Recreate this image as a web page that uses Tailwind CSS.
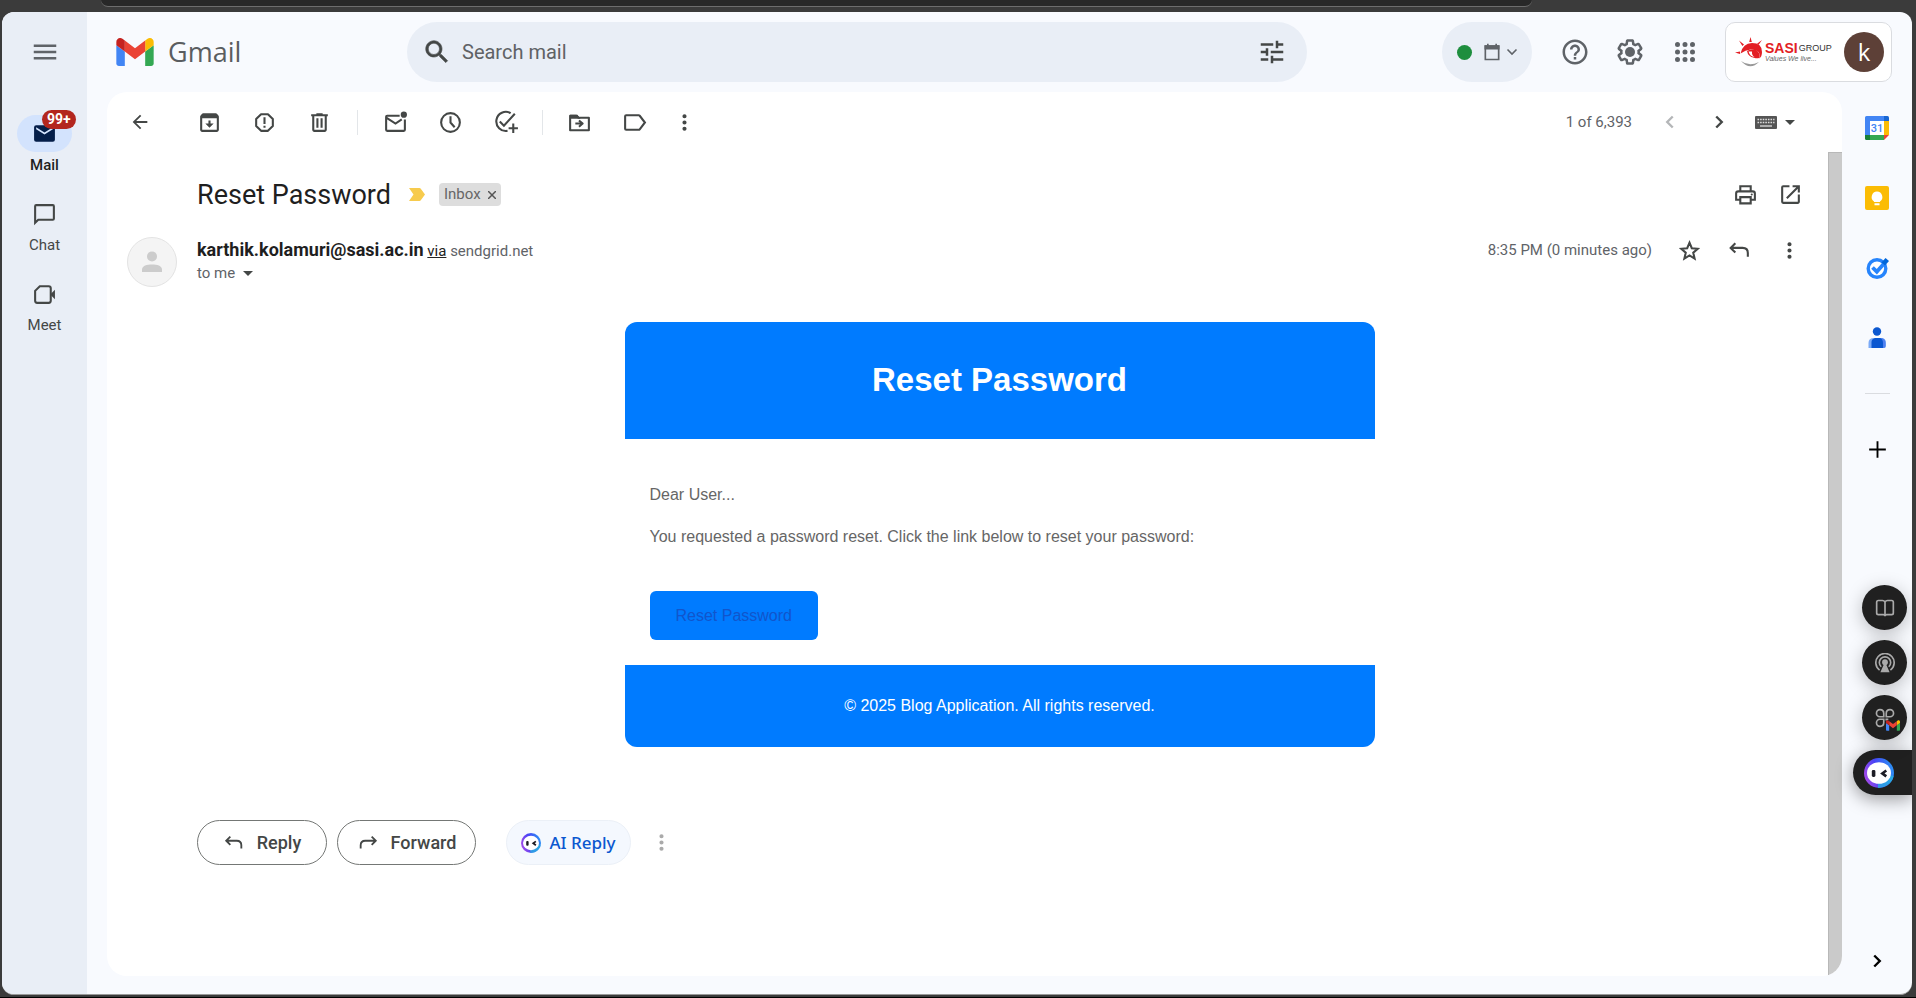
<!DOCTYPE html>
<html lang="en">
<head>
<meta charset="utf-8">
<meta name="viewport" content="width=device-width, initial-scale=1">
<title>Reset Password - Gmail</title>
<script src="https://cdn.jsdelivr.net/npm/@tailwindcss/browser@4"></script>
</head>
<body class="flex h-screen min-h-[900px] flex-col overflow-hidden border-b border-black bg-[#3b3b3b] font-['Roboto',sans-serif] text-[#444746]">
<svg class="absolute size-0" aria-hidden="true">
  <symbol id="gmail" viewBox="52 42 88 66">
    <path fill="#4285f4" d="M58 108h14V74L52 59v43c0 3.32 2.69 6 6 6"/>
    <path fill="#34a853" d="M120 108h14c3.32 0 6-2.69 6-6V59l-20 15"/>
    <path fill="#fbbc04" d="M120 48v26l20-15v-8c0-7.42-8.47-11.65-14.4-7.2"/>
    <path fill="#ea4335" d="M72 74V48l24 18 24-18v26L96 92"/>
    <path fill="#c5221f" d="M52 51v8l20 15V48l-5.6-4.2c-5.94-4.45-14.4-.22-14.4 7.2"/>
  </symbol>
  <linearGradient id="ring" x1="0" y1="0.8" x2="1" y2="0.5">
    <stop offset="0" stop-color="#b14be8"/><stop offset=".5" stop-color="#4a43f5"/><stop offset="1" stop-color="#2c8df5"/>
  </linearGradient>
  <symbol id="robot" viewBox="0 0 30 30">
    <circle cx="15" cy="15" r="15" fill="url(#ring)"/>
    <path d="M14 29.9a15 15 0 0 0 15.6-12l-5-1Q21 25 14 25z" fill="#25b5e0" opacity=".75"/>
    <ellipse cx="15" cy="15" rx="12" ry="10.8" fill="#fff"/>
    <rect x="7.8" y="12" width="3.6" height="7" rx="1.4" fill="#1c1c24"/>
    <path d="M22.3 12.5 18.3 15.4l4 3" fill="none" stroke="#1c1c24" stroke-width="2.6"/>
  </symbol>
  <symbol id="dots" viewBox="0 0 24 24"><path d="M12 8a2 2 0 1 0 0-4 2 2 0 0 0 0 4zm0 2a2 2 0 1 0 0 4 2 2 0 0 0 0-4zm0 6a2 2 0 1 0 0 4 2 2 0 0 0 0-4z"/></symbol>
  <symbol id="reply" viewBox="0 0 24 24"><path d="M8 5 3.500 9.500 8 14M4 9.500h11q5 0 5 5V18" fill="none" stroke="currentColor" stroke-width="2"/></symbol>
  <symbol id="right" viewBox="0 0 24 24"><path d="m9 6 6 6-6 6" fill="none" stroke="currentColor" stroke-width="2.600"/></symbol>
</svg>

<div class="flex h-3 shrink-0 justify-center" aria-hidden="true">
  <div class="mr-[384px] ml-[101px] h-[7px] flex-1 rounded-b-2xl border-b border-[#6d6d6d] bg-[#282828]"></div>
</div>

<div class="relative mr-1 mb-0.5 ml-0.5 flex flex-1 overflow-hidden rounded-xl border-b border-[#999] bg-[#f8fafe]">
  <nav class="flex w-[85px] shrink-0 flex-col items-center bg-[#e9eef6] text-[15px] leading-5">
    <button class="mt-[25px] grid size-[30px] place-items-center" aria-label="Main menu"><svg class="size-[30px] fill-[#5f6368]" viewBox="0 0 24 24"><path d="M3 18h18v-2H3v2zm0-5h18v-2H3v2zm0-7v2h18V6H3z"/></svg></button>
    <a href="#mail" class="relative mt-12 flex flex-col items-center gap-[3px] font-medium text-[#1f1f1f]">
      <span class="grid h-[37px] w-[55px] place-items-center rounded-full bg-[#d3e3fd]"><svg class="size-[25px] fill-[#041e49]" viewBox="0 0 24 24"><path d="M4 4h16a2 2 0 0 1 2 2v12a2 2 0 0 1-2 2H4a2 2 0 0 1-2-2V6a2 2 0 0 1 2-2zm16 4V6l-8 5-8-5v2l8 5z"/></svg></span>
      <span class="absolute -top-[5px] left-[25px] rounded-full bg-[#b3261e] px-[5px] text-[14px] leading-[19px] font-bold text-white">99+</span>
      Mail
    </a>
    <a href="#chat" class="mt-6 flex flex-col items-center gap-1.5">
      <span class="grid h-[30px] place-items-center"><svg class="size-[25px] fill-none stroke-[#444746] stroke-2" viewBox="0 0 24 24"><path d="M3 20V4q0-1 1-1h16q1 0 1 1v12q0 1-1 1H6z"/></svg></span>
      Chat
    </a>
    <a href="#meet" class="mt-6 flex flex-col items-center gap-1.5">
      <span class="grid h-[30px] place-items-center"><svg class="size-[25px] fill-none stroke-[#444746] stroke-2" viewBox="0 0 24 24"><path d="M7.500 4H16q2 0 2 2v12q0 2-2 2H5q-2 0-2-2V8.500z"/><path class="fill-[#444746] stroke-none" d="m17.500 12 4.500-4.500v9z"/></svg></span>
      Meet
    </a>
  </nav>

  <div class="flex min-w-0 flex-1 flex-col">
    <header class="flex h-20 shrink-0 items-center pr-5">
      <a href="#inbox" class="flex w-[320px] items-center gap-3.5 pl-[29px] text-[27px] text-[#5a5d60] font-['Open_Sans',sans-serif]">
        <svg class="h-7 w-[38px]"><use href="#gmail"/></svg>Gmail
      </a>
      <form class="flex h-[60px] max-w-[900px] flex-1 items-center rounded-full bg-[#e9eef6] pr-5 pl-[15px]">
        <button type="button" aria-label="Search"><svg class="size-[30px] fill-[#444746] stroke-[#444746] stroke-[0.500px]" viewBox="0 0 24 24"><path d="M15.500 14h-.79l-.28-.27C15.410 12.590 16 11.110 16 9.500 16 5.910 13.090 3 9.500 3S3 5.910 3 9.500 5.910 16 9.500 16c1.610 0 3.090-.59 4.230-1.570l.27.28v.79l5 4.990L20.490 19l-4.990-5zm-6 0C7.010 14 5 11.990 5 9.500S7.010 5 9.500 5 14 7.010 14 9.500 11.990 14 9.500 14z"/></svg></button>
        <input type="text" aria-label="Search mail" placeholder="Search mail" class="ml-2.5 min-w-0 flex-1 bg-transparent text-[20px] outline-none placeholder:text-[#5f6265]">
        <button type="button" aria-label="Show search options"><svg class="size-[30px] fill-[#444746]" viewBox="0 0 24 24"><path d="M3 17v2h6v-2H3zM3 5v2h10V5H3zm10 16v-2h8v-2h-8v-2h-2v6h2zM7 9v2H3v2h4v2h2V9H7zm14 4v-2H11v2h10zm-6-4h2V7h4V5h-4V3h-2v6z"/></svg></button>
      </form>
      <div class="ml-auto flex shrink-0 items-center">
        <button class="flex h-[60px] w-[90px] items-center rounded-full bg-[#e9eef6] pl-[15px]" aria-label="Status: active">
          <span class="size-[15px] rounded-full bg-[#1e8e3e]"></span>
          <svg class="ml-[10px] size-5" viewBox="0 0 24 24"><path d="M4 5h16v16H4z" fill="none" stroke="#5f6368" stroke-width="2"/><path d="M3 4h18v5H3zM6 2h2v3H6zM16 2h2v3h-2z" fill="#5f6368"/></svg>
          <svg class="ml-1 size-3 fill-none stroke-[#5f6368] stroke-[1.600px]" viewBox="0 0 12 12"><path d="m1.500 3.500 4.500 4.500 4.500-4.500"/></svg>
        </button>
        <button class="ml-[28px]" aria-label="Support"><svg class="size-[30px] fill-[#5f6368]" viewBox="0 0 24 24"><path d="M11 18h2v-2h-2v2zm1-16C6.480 2 2 6.480 2 12s4.480 10 10 10 10-4.480 10-10S17.520 2 12 2zm0 18c-4.410 0-8-3.590-8-8s3.590-8 8-8 8 3.590 8 8-3.590 8-8 8zm0-14c-2.210 0-4 1.790-4 4h2c0-1.100.9-2 2-2s2 .9 2 2c0 2-3 1.750-3 5h2c0-2.250 3-2.500 3-5 0-2.210-1.790-4-4-4z"/></svg></button>
        <button class="ml-[25px]" aria-label="Settings"><svg class="size-[30px] fill-[#5f6368]" viewBox="0 0 24 24"><path d="M13.850 22.250h-3.700c-.74 0-1.360-.54-1.450-1.270l-.27-1.890c-.27-.14-.53-.29-.79-.46l-1.800.72c-.7.260-1.470-.03-1.810-.65L2.200 15.530c-.35-.66-.2-1.440.36-1.880l1.530-1.190c-.01-.15-.02-.3-.02-.46 0-.15.010-.31.020-.46l-1.520-1.190c-.59-.45-.74-1.260-.37-1.880l1.850-3.190c.34-.62 1.110-.9 1.790-.63l1.810.730c.26-.17.520-.32.780-.46l.27-1.910c.09-.7.710-1.250 1.440-1.250h3.700c.74 0 1.360.540 1.450 1.270l.27 1.890c.27.140.53.290.79.460l1.800-.72c.71-.26 1.480.030 1.820.650l1.840 3.180c.36.660.2 1.440-.36 1.880l-1.520 1.190c.01.150.020.300.020.460s-.01.310-.02.460l1.520 1.190c.56.450.72 1.230.370 1.860l-1.860 3.220c-.34.620-1.110.900-1.800.630l-1.800-.72c-.26.170-.52.320-.78.460l-.27 1.910c-.1.680-.72 1.220-1.460 1.220zm-3.230-2h2.760l.37-2.550.53-.22c.44-.18.880-.44 1.340-.78l.45-.34 2.380.960 1.380-2.400-2.030-1.580.070-.56c.03-.26.060-.51.060-.78s-.03-.53-.06-.78l-.07-.56 2.030-1.580-1.390-2.400-2.390.96-.45-.35c-.42-.32-.87-.58-1.330-.77l-.52-.22-.37-2.550h-2.760l-.37 2.550-.53.210c-.44.190-.88.440-1.340.790l-.45.330-2.380-.95-1.390 2.390 2.030 1.580-.07.560a7 7 0 0 0-.06.790c0 .26.020.530.060.780l.07.560-2.030 1.580 1.380 2.400 2.390-.96.450.350c.43.330.86.580 1.330.770l.53.220z"/><circle cx="12" cy="12" r="4"/></svg></button>
        <button class="ml-[25px]" aria-label="Google apps"><svg class="size-[30px] fill-[#5f6368]" viewBox="0 0 24 24"><path d="M6 8a2 2 0 1 0 0-4 2 2 0 0 0 0 4zm6 0a2 2 0 1 0 0-4 2 2 0 0 0 0 4zm6 0a2 2 0 1 0 0-4 2 2 0 0 0 0 4zM6 14a2 2 0 1 0 0-4 2 2 0 0 0 0 4zm6 0a2 2 0 1 0 0-4 2 2 0 0 0 0 4zm6 0a2 2 0 1 0 0-4 2 2 0 0 0 0 4zM6 20a2 2 0 1 0 0-4 2 2 0 0 0 0 4zm6 0a2 2 0 1 0 0-4 2 2 0 0 0 0 4zm6 0a2 2 0 1 0 0-4 2 2 0 0 0 0 4z"/></svg></button>
        <a href="#account" class="ml-[25px] flex h-[60px] w-[167px] items-center rounded-[10px] border border-[#dadce0] bg-white pl-[9px] font-['Liberation_Sans',sans-serif]" aria-label="SASI Group account">
          <svg class="h-8 w-[28px]" viewBox="0 0 28 32"><path d="M5.500 17.500Q8 7 17 7q10 0 10 9 0 5-3 6.500 1.500-3.500-.5-6.500-3-3-8-2.500-5 .5-10 4z" fill="#e31e24"/><path d="M12 15q3-2.500 9-1 5 3 3 8-2 .8-5-.2-6-1-7-6.800z" fill="#e31e24"/><path d="M13.500 15.500q1.500 5 6 5.500-3-2-2.500-5.500z" fill="#fff"/><path d="M15.500 1l1.300 5h-2.600zM4 4.500l5 4-1.600 1.600zM27 4l-3.500 5L22 7.700zM0 16.500l5-1v2.500z" fill="#e31e24"/><path d="M6 25q8 6 18 1-9 9-18-1z" fill="#999"/></svg>
          <span class="flex w-[70px] flex-col pl-0.5">
            <span class="flex items-center gap-px leading-[13px]"><b class="text-[14px] text-[#e31e24]">SASI</b><span class="text-[9px] text-[#333]">GROUP</span></span>
            <i class="text-[7px] leading-[7px] text-[#666]">Values We live...</i>
          </span>
          <span class="ml-auto mr-[7px] grid size-10 place-items-center rounded-full bg-[#5d4037] text-[24px] text-white font-['Open_Sans',sans-serif]">k</span>
        </a>
      </div>
    </header>

    <div class="flex min-h-0 flex-1 pb-[18px] pl-5">
      <main class="flex min-w-0 flex-1 flex-col overflow-hidden rounded-[20px] bg-white">
        <div class="flex h-[60px] shrink-0 items-center pr-[47px] pl-[19px] text-[#444746]">
          <button class="mr-[28px] grid w-7 place-items-center" aria-label="Back to Inbox"><svg class="size-[22px] fill-[#444746]" viewBox="0 0 24 24"><path d="M20 11H7.830l5.590-5.590L12 4l-8 8 8 8 1.410-1.410L7.830 13H20v-2z"/></svg></button>
          <button class="grid w-[55px] place-items-center" aria-label="Archive"><svg class="size-[25px] fill-[#444746]" viewBox="0 0 24 24"><path d="M20.540 5.230l-1.390-1.680C18.880 3.210 18.470 3 18 3H6c-.47 0-.88.21-1.160.55L3.460 5.230C3.170 5.570 3 6.020 3 6.500V19c0 1.100.9 2 2 2h14c1.100 0 2-.9 2-2V6.500c0-.48-.17-.93-.46-1.270zM5 19V8h14v11H5zm8-9h-2v3H8l4 4 4-4h-3z"/></svg></button>
          <button class="grid w-[55px] place-items-center" aria-label="Report spam"><svg class="size-[25px] fill-[#444746]" viewBox="0 0 24 24"><path d="M8.700 4h6.600L20 8.700v6.600L15.300 20H8.700L4 15.300V8.700z" fill="none" stroke="#444746" stroke-width="2" stroke-linejoin="round"/><path d="M11 7h2v6.500h-2zM11 15h2v2h-2z"/></svg></button>
          <button class="grid w-[55px] place-items-center" aria-label="Delete"><svg class="size-[25px] fill-[#444746]" viewBox="0 0 24 24"><path d="M15 4V3H9v1H4v2h1v13c0 1.100.9 2 2 2h10c1.100 0 2-.9 2-2V6h1V4h-5zm2 15H7V6h10v13zM9 8h2v9H9zm4 0h2v9h-2z"/></svg></button>
          <span class="mx-[10px] h-[25px] w-px bg-[#e3e6e9]"></span>
          <button class="grid w-[55px] place-items-center" aria-label="Mark as unread"><svg class="size-[25px]" viewBox="0 0 24 24"><path d="M16 5.500H4q-1 0-1 1V19q0 1 1 1h16q1 0 1-1V9M3.500 7.500 12 13l6-4" fill="none" stroke="#444746" stroke-width="2"/><circle cx="20" cy="4.500" r="3" fill="#444746"/></svg></button>
          <button class="grid w-[55px] place-items-center" aria-label="Snooze"><svg class="size-[25px]" viewBox="0 0 24 24"><path d="M12 3a9 9 0 1 0 0 18 9 9 0 0 0 0-18zM12 6v6l4 4.500" fill="none" stroke="#444746" stroke-width="2"/></svg></button>
          <button class="grid w-[55px] place-items-center" aria-label="Add to Tasks"><svg class="size-[28px]" viewBox="0 0 27 27"><path d="M18 5A9.200 9.200 0 1 0 15 22M7.500 13l4 4L22 5.500M20.500 15v9M16 19.500h9" fill="none" stroke="#444746" stroke-width="2"/></svg></button>
          <span class="mx-[9px] h-[25px] w-px bg-[#e3e6e9]"></span>
          <button class="grid w-[55px] place-items-center" aria-label="Move to"><svg class="size-[25px]" viewBox="0 0 24 24"><path d="M3 5.500h6l2 2h10V19.500H3zM8 13h6m-2.500-3L15 13l-3.500 3" fill="none" stroke="#444746" stroke-width="2" stroke-linejoin="round"/><path d="M3 4.500h7l3 4H3z" fill="#444746"/></svg></button>
          <button class="grid w-[55px] place-items-center" aria-label="Labels"><svg class="size-[25px]" viewBox="0 0 24 24"><path d="M4 5h12q.6 0 1 .5L22 12l-5 6.500q-.4.500-1 .5H4q-1 0-1-1V6q0-1 1-1z" fill="none" stroke="#444746" stroke-width="2"/></svg></button>
          <button class="grid w-[45px] place-items-center" aria-label="More"><svg class="size-[25px] fill-[#444746]"><use href="#dots"/></svg></button>
          <span class="ml-auto text-[15px] text-[#5f6368]">1 of 6,393</span>
          <button class="ml-[27px] text-[#b4b6b8]" aria-label="Newer" disabled><svg class="size-[22px] rotate-180"><use href="#right"/></svg></button>
          <button class="ml-[27px]" aria-label="Older"><svg class="size-[22px]"><use href="#right"/></svg></button>
          <button class="ml-[25px] flex items-center gap-2" aria-label="Input tools">
            <svg class="h-[15px] w-[22px]" viewBox="0 0 22 15"><rect y="1" width="22" height="13" rx="1" fill="#555"/><path d="M2.500 4.500h17M2.500 7.500h17" stroke="#ddd" stroke-width="1.400" stroke-dasharray="1.600 1"/><path d="M5 11h12" stroke="#ccc" stroke-width="1.400"/></svg>
            <svg class="h-[5px] w-2.5 fill-[#444746]" viewBox="0 0 10 5"><path d="M0 0h10L5 5z"/></svg>
          </button>
        </div>

        <div class="flex min-h-0 flex-1">
          <article class="min-w-0 flex-1">
            <div class="flex h-[85px] items-center pr-[25px] pl-[90px]">
              <h2 class="text-[27px] leading-9 text-[#1f1f1f]">Reset Password</h2>
              <svg class="ml-[18px] h-[13px] w-4 fill-[#f7cb4d]" viewBox="0 0 16 13"><path d="M0 0h10.500q.8 0 1.300.700L16 6.500l-4.200 5.800q-.5.700-1.300.7H0l4.500-6.500z"/></svg>
              <span class="ml-3.5 flex h-[23px] items-center gap-[7px] rounded bg-[#ddd] px-[5px] text-[15px] text-[#666]">Inbox
                <button aria-label="Remove label Inbox"><svg class="size-2 stroke-[#555] stroke-[1.500px]" viewBox="0 0 8 8"><path d="M0 0l8 8M8 0 0 8"/></svg></button></span>
              <button class="ml-auto" aria-label="Print all"><svg class="size-[25px]" viewBox="0 0 24 24"><path d="M7 8V4h10v4M7 17H3v-6q0-2 2-2h14q2 0 2 2v6h-4M7 14.500h10V20.500H7z" fill="none" stroke="#444746" stroke-width="2"/><circle cx="18" cy="12" r="1" fill="#444746"/></svg></button>
              <button class="ml-5" aria-label="In new window"><svg class="size-[25px] fill-[#444746]" viewBox="0 0 24 24"><path d="M19 19H5V5h6V3H5a2 2 0 0 0-2 2v14a2 2 0 0 0 2 2h14c1.100 0 2-.9 2-2v-7h-2v7zM14 3v2h3.590l-9.830 9.830 1.410 1.410L19 6.410V10h2V3h-7z"/></svg></button>
            </div>

            <div class="flex h-[50px] pr-[26px] pl-5">
              <span class="grid size-[50px] shrink-0 place-items-center rounded-full border border-[#e3e3e3] bg-[#f4f4f4]"><svg class="size-[30px] fill-[#ccc]" viewBox="0 0 24 24"><circle cx="12" cy="7.500" r="4"/><path d="M4 20v-2c0-3 4-4 8-4s8 1 8 4v2z"/></svg></span>
              <div class="ml-5 flex flex-col text-[15px] leading-[25px] text-[#5f6368]">
                <div class="h-6"><b class="text-[18px] text-[#1f1f1f]">karthik.kolamuri@sasi.ac.in</b> <a href="#via" class="text-[#222] underline">via</a> sendgrid.net</div>
                <button class="flex items-center gap-2" aria-label="Show details">to me <svg class="h-[5px] w-2.5 fill-[#444746]" viewBox="0 0 10 5"><path d="M0 0h10L5 5z"/></svg></button>
              </div>
              <div class="ml-auto flex h-[26px] items-center">
                <span class="text-[15px] text-[#5f6368]">8:35 PM (0 minutes ago)</span>
                <button class="ml-[25px]" aria-label="Star"><svg class="size-[25px]" viewBox="0 0 24 24"><path d="m12 4.500 2.200 5.300 5.700.5-4.300 3.800 1.300 5.600-4.900-3-4.900 3 1.300-5.600L4.100 10.300l5.700-.5z" fill="none" stroke="#444746" stroke-width="2"/></svg></button>
                <button class="ml-[25px]" aria-label="Reply"><svg class="size-[25px]"><use href="#reply"/></svg></button>
                <button class="ml-[25px]" aria-label="More"><svg class="size-[25px] fill-[#444746]"><use href="#dots"/></svg></button>
              </div>
            </div>

            <section class="mx-auto mt-[35px] w-full max-w-[750px] translate-x-8 font-['Liberation_Sans',sans-serif] text-base leading-[26px] text-[#666]">
              <h1 class="rounded-t-[12px] bg-[#007bff] pt-[32px] pb-[33px] text-center text-[33px] leading-[52px] font-bold text-white">Reset Password</h1>
              <div class="px-[25px] pt-[43px] pb-[25px]">
                <p>Dear User...</p>
                <p class="mt-4">You requested a password reset. Click the link below to reset your password:</p>
                <a href="#reset" class="mt-[41px] block w-fit rounded-md bg-[#007bff] px-[26px] py-3 leading-[25px] text-[#1155cc]">Reset Password</a>
              </div>
              <footer class="rounded-b-[12px] bg-[#007bff] py-7 text-center text-white">© 2025 Blog Application. All rights reserved.</footer>
            </section>

            <div class="mt-[73px] flex items-center pl-[90px] text-[18px] font-medium">
              <button class="flex h-[45px] w-[130px] items-center justify-center gap-3 rounded-full border border-[#747775]"><svg class="size-[22px]"><use href="#reply"/></svg>Reply</button>
              <button class="ml-2.5 flex h-[45px] w-[139px] items-center justify-center gap-3 rounded-full border border-[#747775]"><svg class="size-[22px] -scale-x-100"><use href="#reply"/></svg>Forward</button>
              <button class="ml-[30px] flex h-[45px] w-[125px] items-center justify-center gap-2 rounded-full border border-[#ebf0f7] bg-[#f4f8fe] font-['Noto_Sans',sans-serif] text-[17px] text-[#0b57d0]"><svg class="size-5"><use href="#robot"/></svg>AI Reply</button>
              <button class="ml-[18px]" aria-label="More reply options"><svg class="size-[25px] fill-[#aaa]"><use href="#dots"/></svg></button>
            </div>
          </article>
          <div class="w-3.5 shrink-0 border-t border-l border-[#b8b8b8] bg-[#cacaca]"></div>
        </div>
      </main>

      <aside class="flex w-[70px] shrink-0 flex-col items-center pt-6">
        <a href="#calendar" aria-label="Calendar"><svg class="size-6" viewBox="0 0 24 24"><path d="M0 1.500Q0 0 1.500 0H19v5H5v14H0z" fill="#4285f4"/><path d="M19 0h3.500Q24 0 24 1.500V5h-5z" fill="#1967d2"/><path d="M19 5h5v14h-5z" fill="#fbbc04"/><path d="M5 19h14v5H5z" fill="#34a853"/><path d="M0 19h5v5H1.500Q0 24 0 22.500z" fill="#188038"/><path d="M19 19h5l-5 5z" fill="#ea4335"/><path d="M5 5h14v14H5z" fill="#fff"/><text x="12" y="16" text-anchor="middle" font-family="Roboto" font-size="11" font-weight="500" fill="#4285f4">31</text></svg></a>
        <a href="#keep" aria-label="Keep" class="mt-[46px]"><svg class="size-6" viewBox="0 0 24 24"><rect width="24" height="24" rx="2" fill="#fbbc04"/><path d="M12 5.500a5.500 5.500 0 0 0-3 10V16h6v-.5a5.500 5.500 0 0 0-3-10zM9.500 17.300h5v2h-5z" fill="#fff"/></svg></a>
        <a href="#tasks" aria-label="Tasks" class="mt-[46px]"><svg class="size-6" viewBox="0 0 24 24"><circle cx="12" cy="12.500" r="8.800" fill="#fff" stroke="#2684fc" stroke-width="3.400"/><path d="m7.500 11.500 4.300 4.200 7.500-8.500" fill="none" stroke="#2684fc" stroke-width="3.800"/><path d="m16.500 6.500 4-4.500L24 5l-4 4.500z" fill="#0066da"/></svg></a>
        <a href="#contacts" aria-label="Contacts" class="mt-[46px]"><svg class="size-6" viewBox="0 0 24 24"><circle cx="12" cy="5.500" r="4.200" fill="#0b57d0"/><path d="M9 12h7q5 0 5 5v3q0 2-2 2H3.500v-5Q3.500 12 9 12z" fill="#7baaf7"/><path d="M15 12q5.500 0 5.500 5v3q0 2-2 2H13V12z" fill="#4f80f0"/><path d="M10 12h5q3 1 3 5v5H6.500v-6q0-3 3.500-4z" fill="#0b57d0"/></svg></a>
        <hr class="mt-[43px] w-[25px] border-[#dadce0]">
        <button class="mt-[43px]" aria-label="Get add-ons"><svg class="size-[25px] stroke-black stroke-[1.800px]" viewBox="0 0 24 24"><path d="M12 4v16M4 12h16"/></svg></button>
        <button class="mt-auto mb-1 text-black" aria-label="Hide side panel"><svg class="size-[22px]"><use href="#right"/></svg></button>
      </aside>
    </div>
  </div>

  <!-- Floating assistant launcher, pinned over the side panel -->
  <div class="absolute right-0 bottom-[199px] flex flex-col items-end gap-2.5">
    <button class="mr-[5px] grid size-[45px] place-items-center rounded-full bg-[#202020] shadow-[0_4px_18px_rgba(0,0,0,0.25)]" aria-label="Read"><svg class="size-5 fill-none stroke-[#aaa] stroke-2" viewBox="0 0 24 24"><path d="M12 5Q11 3 9 3H4Q2 3 2 5v13q0 2 2 2h6q2 0 2 2 0-2 2-2h6q2 0 2-2V5q0-2-2-2h-5q-2 0-3 2v17"/></svg></button>
    <button class="mr-[5px] grid size-[45px] place-items-center rounded-full bg-[#202020] shadow-[0_4px_18px_rgba(0,0,0,0.25)]" aria-label="Podcast"><svg class="size-5 fill-none stroke-[#aaa] stroke-2" viewBox="0 0 24 24"><path d="M5.500 20.500a11 11 0 1 1 13 0M7.500 16.500a6.800 6.800 0 1 1 9 0"/><circle cx="12" cy="11" r="2.500" fill="#aaa"/><path d="m12 13 4 9H8z" fill="#aaa"/></svg></button>
    <button class="relative mr-[5px] grid size-[45px] place-items-center rounded-full bg-[#202020] shadow-[0_4px_18px_rgba(0,0,0,0.25)]" aria-label="Gmail tools"><svg class="size-5 fill-none stroke-[#aaa] stroke-2" viewBox="0 0 24 24"><path d="M6 2q4.500 0 4.500 4.500v4H6A4.200 4.200 0 0 1 6 2zM18 2q-4.500 0-4.500 4.500v4H18A4.200 4.200 0 0 0 18 2zM6 22q4.500 0 4.500-4.500v-4H6A4.200 4.200 0 0 0 6 22zM13.500 15v-1.500H16"/></svg><svg class="absolute right-[7px] bottom-[9px] h-[11px] w-3.5"><use href="#gmail"/></svg></button>
    <button class="flex h-[45px] w-[59px] items-center rounded-l-full bg-[#202020] pl-[11px] shadow-[0_4px_18px_rgba(0,0,0,0.4)]" aria-label="AI assistant"><svg class="size-[30px]"><use href="#robot"/></svg></button>
  </div>
</div>
</body>
</html>
